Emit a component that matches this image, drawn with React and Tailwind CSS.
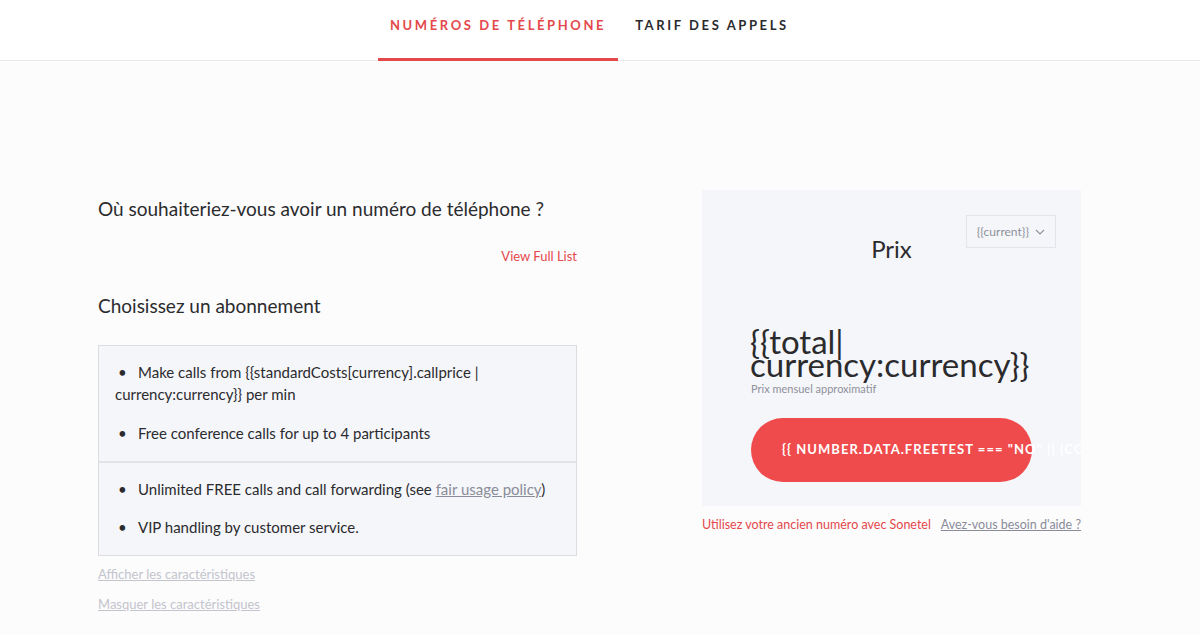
import React from "react";

const Bullet = ({ children }) => (
  <li className="leading-[22px]">
    <span className="inline-block w-[23px] pl-[3px]">•</span>
    {children}
  </li>
);

const App = () => {
  return (
    <div
      className="min-h-[634px] bg-[#fcfcfd] text-[#2b2b2e]"
      style={{ fontFamily: "Lato, 'Noto Sans', sans-serif" }}
    >
      <header className="h-[61px] border-b border-[#e8e8ea] bg-white flex">
        <nav className="flex h-full pl-[378px]">
          <a className="relative flex items-start pt-[16px] px-[12px] text-[13px] font-bold tracking-[0.2em] text-[#e4484b]">
            NUMÉROS DE TÉLÉPHONE
            <span className="absolute left-0 right-0 bottom-[-1px] h-[3px] bg-[#e4484b]" />
          </a>
          <a className="flex items-start pt-[16px] pl-[17px] text-[13px] font-bold tracking-[0.2em] text-[#2b2b2e]">
            TARIF DES APPELS
          </a>
        </nav>
      </header>

      <main className="flex pt-[129px] pl-[98px] gap-[125px]">
        <section className="w-[479px] pt-[7px]">
          <h2 className="text-[19px] leading-[24px] text-[#2b2b2e]">
            Où souhaiteriez-vous avoir un numéro de téléphone ?
          </h2>
          <div className="flex justify-end mt-[26px]">
            <a className="text-[13px] text-[#e4484b]">View Full List</a>
          </div>
          <h2 className="mt-[27px] text-[19px] leading-[24px] text-[#2b2b2e]">
            Choisissez un abonnement
          </h2>

          <div className="mt-[27px] border border-[#dcdde2] bg-[#f5f6fa] text-[15px] text-[#2b2b2e]">
            <ul className="pl-[16px] pr-[20px] pt-[15px] pb-[17px] space-y-[17px]">
              <Bullet>
                Make calls from {"{{standardCosts[currency].callprice |"} currency:currency{"}}"} per min
              </Bullet>
              <Bullet>Free conference calls for up to 4 participants</Bullet>
            </ul>
            <div className="h-[2px] bg-[#e2e3e7]" />
            <ul className="pl-[16px] pr-[20px] pt-[15px] pb-[17px] space-y-[16px]">
              <Bullet>
                Unlimited FREE calls and call forwarding (see{" "}
                <a className="underline text-[#8a8c99]">fair usage policy</a>)
              </Bullet>
              <Bullet>VIP handling by customer service.</Bullet>
            </ul>
          </div>

          <div className="mt-[9px] flex flex-col gap-[12px] text-[13px] text-[#c3c4cc]">
            <a className="underline leading-[18px]">Afficher les caractéristiques</a>
            <a className="underline leading-[18px]">Masquer les caractéristiques</a>
          </div>
        </section>

        <section className="w-[379px]">
          <div className="relative h-[316px] bg-[#f5f6fa] overflow-hidden">
            <button className="absolute right-[25px] top-[25px] flex items-center gap-[6px] h-[33px] px-[10px] border border-[#e4e5ea] text-[12px] text-[#8e909b]">
              {"{{current}}"}
              <svg width="10" height="6" viewBox="0 0 10 6" fill="none">
                <path d="M1 1l4 4 4-4" stroke="#8e909b" strokeWidth="1.1" />
              </svg>
            </button>
            <div className="pt-[44px] text-center text-[24px] leading-[30px] text-[#2b2b2e]">
              Prix
            </div>
            <div className="pl-[48px] mt-[66px] text-[33px] leading-[23px] text-[#2b2b2e] whitespace-nowrap">
              <div>{"{{total|"}</div>
              <div>{"currency:currency}}"}</div>
            </div>
            <div className="pl-[49px] mt-[5px] text-[11px] text-[#8e909b]">
              Prix mensuel approximatif
            </div>
            <div className="pl-[49px] mt-[20px]">
              <div className="w-[281px] h-[64px] rounded-full bg-[#ef4b4d] flex items-center pl-[31px] whitespace-nowrap text-[13px] font-bold tracking-[0.08em] text-white">
                {'{{ NUMBER.DATA.FREETEST === "NO" || (COUNTRY.CODE && PLAN) }}'}
              </div>
            </div>
          </div>
          <div className="mt-[10px] flex justify-between whitespace-nowrap text-[12.5px]">
            <a className="text-[#e4484b]">Utilisez votre ancien numéro avec Sonetel</a>
            <a className="underline text-[#8a8c99]">Avez-vous besoin d'aide ?</a>
          </div>
        </section>
      </main>
    </div>
  );
};

export default App;
